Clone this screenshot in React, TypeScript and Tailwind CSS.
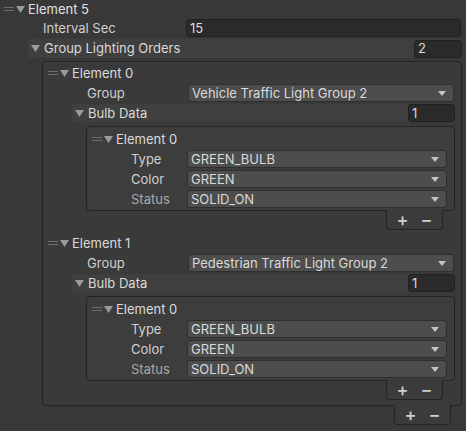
import React from "react";

function Handle() {
  return (
    <div className="flex flex-col gap-[2px] w-[10px] shrink-0">
      <div className="h-[1px] bg-[#6f6f6f]" />
      <div className="h-[1px] bg-[#6f6f6f]" />
    </div>
  );
}

function Arrow({ color = "#9a9a9a" }: { color?: string }) {
  return (
    <svg width="9" height="7" viewBox="0 0 9 7" className="shrink-0">
      <path d="M0 0 H9 L4.5 7 Z" fill={color} />
    </svg>
  );
}

function Dropdown({ value }: { value: string }) {
  return (
    <div className="flex-1 h-[18px] flex items-center justify-between bg-[#4d4d4d] border border-[#2e2e2e] rounded-[3px] pl-[3px] pr-[7px] text-[#dadada]">
      <span>{value}</span>
      <svg width="8" height="5" viewBox="0 0 8 5">
        <path d="M0 0 H8 L4 5 Z" fill="#c4c4c4" />
      </svg>
    </div>
  );
}

function Field({ value, w }: { value: string; w?: string }) {
  return (
    <div
      className={`h-[18px] flex items-center bg-[#2a2a2a] border border-[#212121] rounded-[3px] pl-[3px] text-[#dadada] ${
        w ?? "flex-1"
      }`}
    >
      {value}
    </div>
  );
}

// footer with the + / - buttons, hangs under the list box
function Footer({ mr }: { mr: string }) {
  return (
    <div
      className={`self-end ${mr} w-[57px] h-[20px] flex items-center justify-center gap-[12px] border-x border-b border-[#242424] rounded-b-[4px] bg-[#3b3b3b] text-[#d0d0d0] text-[18px] font-medium -mt-[1px]`}
    >
      <span>+</span>
      <span>−</span>
    </div>
  );
}

function Bulb() {
  const rows = [
    { label: "Type", value: "GREEN_BULB", dim: false },
    { label: "Color", value: "GREEN", dim: false },
    { label: "Status", value: "SOLID_ON", dim: true },
  ];
  return (
    <div className="flex flex-col">
      <div className="ml-[43px] mr-[6px] mt-[4px] border border-[#242424] rounded-[4px] bg-[#3d3d3d] pt-[3px] pb-[2px] flex flex-col gap-[2px]">
        <div className="h-[18px] flex items-center pl-[5px]">
          <Handle />
          <div className="ml-[2px]">
            <Arrow />
          </div>
          <span className="ml-[3px] text-[#dadada]">Element 0</span>
        </div>
        {rows.map((r) => (
          <div key={r.label} className="h-[18px] flex items-center pr-[7px]">
            <span
              className={`pl-[44px] w-[100px] shrink-0 ${
                r.dim ? "text-[#a8a8a8]" : "text-[#d0d0d0]"
              }`}
            >
              {r.label}
            </span>
            <Dropdown value={r.value} />
          </div>
        ))}
      </div>
      <Footer mr="mr-[18px]" />
    </div>
  );
}

function Element({ name, group }: { name: string; group: string }) {
  return (
    <div className="flex flex-col">
      <div className="h-[18px] flex items-center pl-[5px]">
        <Handle />
        <div className="ml-[2px]">
          <Arrow />
        </div>
        <span className="ml-[3px] text-[#dadada]">{name}</span>
      </div>
      <div className="mt-[2px] h-[18px] flex items-center pr-[7px]">
        <span className="pl-[44px] w-[145px] shrink-0 text-[#d0d0d0]">Group</span>
        <Dropdown value={group} />
      </div>
      <div className="mt-[2px] ml-[29px] mr-[6px] h-[18px] flex items-center bg-[#3f3f3f]">
        <div className="ml-[3px]">
          <Arrow />
        </div>
        <span className="ml-[4px] flex-1 text-[#dadada]">Bulb Data</span>
        <Field value="1" w="w-[47px]" />
      </div>
      <Bulb />
    </div>
  );
}

export default function App() {
  return (
    <div
      className="w-[466px] h-[431px] bg-[#383838] overflow-hidden text-[13px] leading-none"
      style={{ fontFamily: "Inter, 'Noto Sans', sans-serif" }}
    >
      <div className="h-[18px] flex items-center pl-[4px]">
        <Handle />
        <div className="ml-[2px]">
          <Arrow />
        </div>
        <span className="ml-[3px] text-[#e0e0e0]">Element 5</span>
      </div>
      <div className="mt-[1px] h-[18px] flex items-center pr-[5px]">
        <span className="pl-[43px] w-[186px] shrink-0 text-[#d0d0d0]">Interval Sec</span>
        <Field value="15" />
      </div>
      <div className="mt-[2px] ml-[28px] mr-[4px] h-[19px] flex items-center bg-[#3f3f3f]">
        <div className="ml-[3px]">
          <Arrow />
        </div>
        <span className="ml-[4px] flex-1 text-[#dadada]">Group Lighting Orders</span>
        <Field value="2" w="w-[48px]" />
      </div>
      <div className="flex flex-col">
        <div className="mt-[3px] ml-[42px] mr-[4px] border border-[#242424] rounded-[4px] bg-[#3a3a3a] pt-[2px] pb-[5px] flex flex-col gap-[4px]">
          <Element name="Element 0" group="Vehicle Traffic Light Group 2" />
          <Element name="Element 1" group="Pedestrian Traffic Light Group 2" />
        </div>
        <Footer mr="mr-[15px]" />
      </div>
    </div>
  );
}
